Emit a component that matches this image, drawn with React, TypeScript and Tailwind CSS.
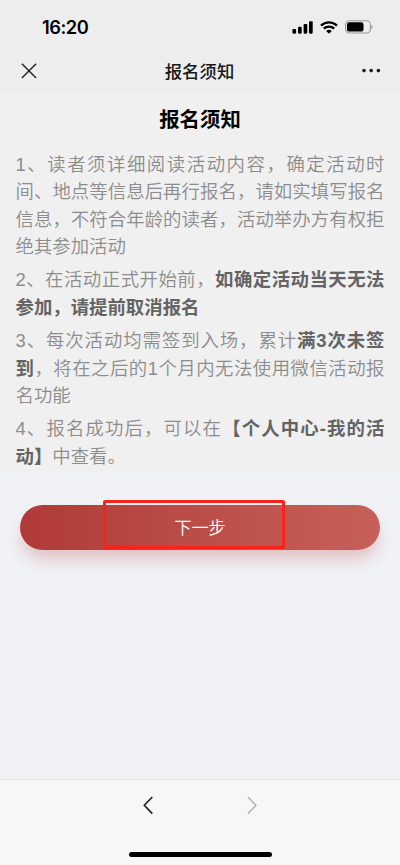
import type { ReactNode } from 'react';

const full = 'whitespace-nowrap [text-align-last:justify]';

function Line({ children, last = false }: { children: ReactNode; last?: boolean }) {
  return <div className={last ? 'whitespace-nowrap' : full}>{children}</div>;
}

function B({ children }: { children: ReactNode }) {
  return <strong className="font-bold text-[#646464]">{children}</strong>;
}

function StatusBar() {
  return (
    <div className="flex h-[49px] items-center justify-between pt-[5px] pl-[42px] pr-[27px]">
      <span className="font-[Inter,'Liberation_Sans',sans-serif] text-[18.3px] leading-none font-semibold tracking-[-0.5px] text-black">16:20</span>
      <div className="flex items-center gap-[7px]">
        <svg width="21" height="13" viewBox="0 0 21 13">
          <rect x="0.4" y="8" width="3.7" height="4.7" rx="1.1" />
          <rect x="6" y="5.7" width="3.7" height="7" rx="1.1" />
          <rect x="11.6" y="3" width="3.7" height="9.7" rx="1.1" />
          <rect x="17" y="0.2" width="3.7" height="12.5" rx="1.1" />
        </svg>
        <svg width="18" height="13" viewBox="0 0 18 13" fill="none" stroke="#000" strokeWidth="2.3">
          <path d="M1 4.7 A11.5 11.5 0 0 1 17 4.7" />
          <path d="M3.8 7.7 A7.5 7.5 0 0 1 14.2 7.7" />
          <path d="M6.2 10 A4.1 4.1 0 0 1 11.8 10 L9 12.8 Z" fill="#000" stroke="none" />
        </svg>
        <svg width="28" height="14" viewBox="0 0 28 14" fill="none">
          <rect x="0.6" y="0.8" width="24.8" height="12.2" rx="3.7" stroke="#999" strokeWidth="1.1" />
          <rect x="2" y="2.2" width="16.5" height="9.4" rx="2.2" fill="#000" />
          <path d="M26.5 5v4c1.4-.5 1.4-3.5 0-4Z" fill="#888" />
        </svg>
      </div>
    </div>
  );
}

export default function App() {
  return (
    <div className="flex h-[865px] w-[400px] flex-col overflow-hidden bg-[#f0f2f6] font-['Liberation_Sans','Noto_Sans_CJK_SC',sans-serif] [text-spacing-trim:space-all]" lang="zh-CN">
      <header className="h-[93px] shrink-0 bg-[#ededed]">
        <StatusBar />
        <div className="flex h-[44px] items-center justify-between pr-[19px] pl-[21px]">
          <svg width="20" height="20" viewBox="0 0 20 20" fill="none" stroke="#222" strokeWidth="1.4">
            <path d="M.9 2.7 15.1 16.9M15.1 2.7.9 16.9" />
          </svg>
          <span className="mr-[3px] pt-[3px] text-[17.4px] leading-none font-medium text-[#181818]">报名须知</span>
          <svg width="20" height="6" viewBox="0 0 20 6" fill="#181818">
            <circle cx="3" cy="2.6" r="1.8" />
            <circle cx="10.2" cy="2.6" r="1.8" />
            <circle cx="17.4" cy="2.6" r="1.8" />
          </svg>
        </div>
      </header>

      <main className="h-[381px] shrink-0 bg-[#f0f0f0] px-[15.5px] pt-[12px]">
        <h1 className="text-center text-[20.4px] leading-[30px] font-bold text-black">报名须知</h1>
        <div className="mt-[15.7px] flex flex-col gap-[5.4px] text-[18.4px] leading-[27.6px] font-[350] text-[#8c8c8c]">
          <div>
            <Line>1、读者须详细阅读活动内容，确定活动时</Line>
            <Line>间、地点等信息后再行报名，请如实填写报名</Line>
            <Line>信息，不符合年龄的读者，活动举办方有权拒</Line>
            <Line last>绝其参加活动</Line>
          </div>
          <div>
            <Line>2、在活动正式开始前，<B>如确定活动当天无法</B></Line>
            <Line last><B>参加，请提前取消报名</B></Line>
          </div>
          <div>
            <Line>3、每次活动均需签到入场，累计<B>满3次未签</B></Line>
            <Line><B>到</B>，将在之后的1个月内无法使用微信活动报</Line>
            <Line last>名功能</Line>
          </div>
          <div>
            <Line>4、报名成功后，可以在<B>【个人中心-我的活</B></Line>
            <Line last><B>动】</B>中查看。</Line>
          </div>
        </div>
      </main>

      <section className="flex-1 px-5 pt-[31px]">
        <button className="relative flex h-[45px] w-full items-center justify-center rounded-full bg-linear-to-r from-[#b03a38] to-[#c7605a] pt-[3px] text-[17.2px] font-[350] text-white shadow-[0_11px_16px_-2px_rgba(190,60,60,0.27)]">
          下一步
          <span className="absolute -top-[5px] left-[83px] h-[48.5px] w-[182px] rounded-[2px] border-3 border-[#f82419]" />
          <span className="absolute -top-[2px] left-[86px] h-[2px] w-[176px] bg-[#f7efef]" />
        </button>
      </section>

      <footer className="flex h-[86px] shrink-0 flex-col items-center border-t border-[#e3e4e6] bg-[#f7f7f7]">
        <div className="flex w-full justify-between pt-[16px] pr-[143px] pl-[143px]">
          <svg width="10" height="19" viewBox="0 0 10 19" fill="none" stroke="#1c1c1c" strokeWidth="1.6">
            <path d="M9.3 1 1.3 9.3l8 8.3" />
          </svg>
          <svg width="10" height="19" viewBox="0 0 10 19" fill="none" stroke="#b5b5b5" strokeWidth="1.6">
            <path d="m.9 1 8 8.3-8 8.3" />
          </svg>
        </div>
        <div className="mt-[37px] h-[5px] w-[143px] rounded-full bg-black" />
      </footer>
    </div>
  );
}
